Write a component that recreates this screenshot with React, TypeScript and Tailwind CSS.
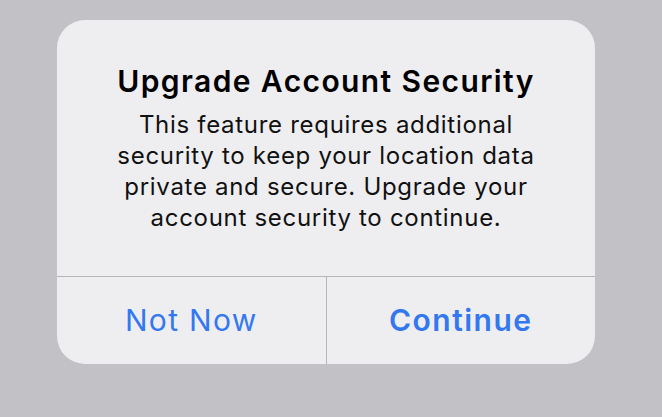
import React from "react";

export default function App() {
  return (
    <div className="w-[662px] h-[417px] bg-[#c2c1c6] pt-[20px] pl-[57px]" style={{ fontFamily: "Inter, 'Noto Sans', sans-serif" }}>
      <div className="w-[538px] h-[344px] bg-[#eeeef0] rounded-[28px] flex flex-col overflow-hidden">
        <div className="h-[256px] flex flex-col items-center pt-[43px] text-center">
          <div className="text-[30px] leading-[36px] font-semibold text-black tracking-[1.4px]">Upgrade Account Security</div>
          <div className="mt-[10px] text-[24px] leading-[31px] text-[#111] tracking-[0.7px]">
            This feature requires additional<br />
            security to keep your location data<br />
            private and secure. Upgrade your<br />
            account security to continue.
          </div>
        </div>
        <div className="h-[1px] bg-[#b6b6b9]" />
        <div className="flex-1 flex">
          <div className="flex-1 flex items-center justify-center text-[#3478f0] text-[30px] tracking-[1.3px]">Not Now</div>
          <div className="w-[1px] bg-[#b6b6b9]" />
          <div className="flex-1 flex items-center justify-center text-[#3478f0] text-[30px] font-semibold tracking-[1.5px]">Continue</div>
        </div>
      </div>
    </div>
  );
}
